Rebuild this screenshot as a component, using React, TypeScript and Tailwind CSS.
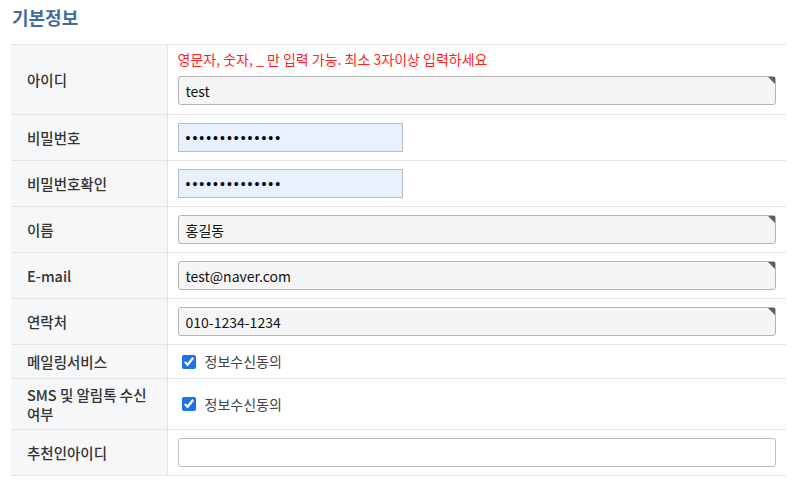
import React from "react";

// ─── Field pieces ─────────────────────────────────────────────────────────────

const font = "font-['Noto_Sans_CJK_KR','Noto_Sans',sans-serif]";

function FilledInput({ value }: { value: string }) {
  return (
    <div className="relative h-[29px] w-full">
      <input
        readOnly
        value={value}
        className="h-full w-full rounded-[3px] border border-[#b4b4b4] bg-[#f5f5f5] px-[7px] text-[14px] text-[#111] outline-none"
      />
      {/* autofill corner marker */}
      <span className="pointer-events-none absolute right-[1px] top-[1px] h-[7px] w-[7px] bg-[#5b6358] [clip-path:polygon(0_0,100%_0,100%_100%)]" />
    </div>
  );
}

function PasswordInput() {
  return (
    <input
      type="password"
      readOnly
      value="12345678901234"
      className="h-[29px] w-[225px] border border-[#b5bcc6] bg-[#e8f0fe] px-[7px] font-['Liberation_Sans',sans-serif] text-[14px] tracking-[2px] text-black outline-none"
    />
  );
}

function Agree() {
  return (
    <label className="flex items-center gap-[9px] text-[14px] text-[#444]">
      <input
        type="checkbox"
        defaultChecked
        className="m-0 ml-[4px] h-[14px] w-[14px] accent-[#1a73e8]"
      />
      정보수신동의
    </label>
  );
}

// ─── Component ────────────────────────────────────────────────────────────────

export default function App() {
  const rows: { label: React.ReactNode; h: string; body: React.ReactNode }[] = [
    { label: "비밀번호", h: "h-[46px]", body: <PasswordInput /> },
    { label: "비밀번호확인", h: "h-[46px]", body: <PasswordInput /> },
    { label: "이름", h: "h-[46px]", body: <FilledInput value="홍길동" /> },
    { label: "E-mail", h: "h-[46px]", body: <FilledInput value="test@naver.com" /> },
    { label: "연락처", h: "h-[46px]", body: <FilledInput value="010-1234-1234" /> },
    { label: "메일링서비스", h: "h-[34px]", body: <Agree /> },
    {
      label: (
        <span className="block leading-[19px]">
          SMS 및 알림톡 수신
          <br />
          여부
        </span>
      ),
      h: "h-[51px]",
      body: <Agree />,
    },
    {
      label: "추천인아이디",
      h: "h-[46px]",
      body: (
        <input className="h-[29px] w-full rounded-[3px] border border-[#b8bcc2] bg-white px-[7px] text-[14px] outline-none" />
      ),
    },
  ];

  return (
    <div className={`min-h-screen bg-white px-[11px] pr-[7px] ${font}`}>
      <h2 className="pt-[4px] pl-[1px] text-[18px] font-semibold leading-[26px] text-[#3f6d9b]">
        기본정보
      </h2>

      <table className="mt-[14px] w-full border-collapse border-t border-[#e5e5e5]">
        <tbody>
          <tr className="h-[70px] border-b border-[#e5e5e5]">
            <th className="w-[156px] border-r border-[#e5e5e5] bg-[#f5f7f9] pl-[16px] text-left text-[14.5px] font-medium text-[#333]">
              아이디
            </th>
            <td className="pl-[10px] pr-[10px] pt-[4px] pb-[8px] align-top">
              <p className="text-[14px] leading-[20px] text-[#ff1f1f]">
                영문자, 숫자, _ 만 입력 가능. 최소 3자이상 입력하세요
              </p>
              <div className="mt-[7px]">
                <FilledInput value="test" />
              </div>
            </td>
          </tr>
          {rows.map((r, i) => (
            <tr key={i} className={`${r.h} border-b border-[#e5e5e5]`}>
              <th className="w-[156px] border-r border-[#e5e5e5] bg-[#f5f7f9] pl-[16px] text-left text-[14.5px] font-medium leading-[18px] text-[#333]">
                {r.label}
              </th>
              <td className="pl-[10px] pr-[10px] align-middle">{r.body}</td>
            </tr>
          ))}
        </tbody>
      </table>
    </div>
  );
}
